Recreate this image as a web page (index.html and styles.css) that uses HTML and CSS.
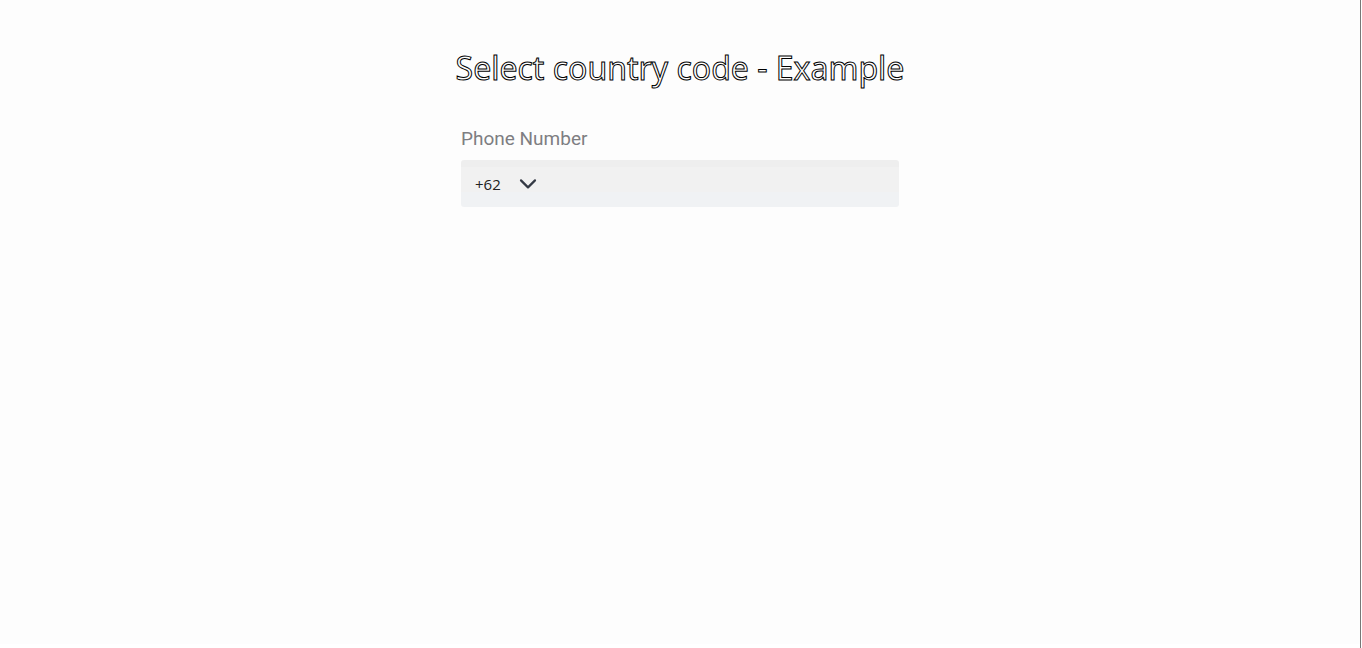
FILE: index.html
```html
<!DOCTYPE html>
<html lang="en">
<head>
<meta charset="utf-8">
<title>Select country code - Example</title>
<link rel="stylesheet" href="styles.css">
</head>
<body class="page">
<main class="content">
  <h1 class="title">Select country code - Example</h1>
  <form class="phone-form">
    <label class="phone-label" for="phone">Phone Number</label>
    <div class="phone-field">
      <div class="code-picker">
        <select class="code-select" aria-label="Country code">
          <option selected>+62</option>
        </select>
        <svg class="chevron" viewBox="0 0 18 12" aria-hidden="true"><path d="M2 2.4 9 9.4 16 2.4"/></svg>
      </div>
      <input class="phone-input" id="phone" type="tel">
    </div>
  </form>
</main>
</body>
</html>
```

FILE: styles.css
```css
* {
  box-sizing: border-box;
}

html {
  background: #fff;
}

.page {
  margin: 0 1px 0 0;
  min-height: 100vh;
  border-right: 1px solid #777;
  font-family: "Open Sans", "Noto Sans", sans-serif;
}

.content {
  display: flex;
  flex-direction: column;
  align-items: center;
  min-height: calc(100vh - 4px);
  padding: 44px 16px;
  background: #fdfdfd;
}

.title {
  margin: 0;
  color: #fff;
  font-family: "Noto Sans", sans-serif;
  font-size: 32px;
  font-weight: 400;
  line-height: 48px;
  -webkit-text-stroke: 1px #000;
}

.phone-form {
  width: 100%;
  max-width: 438px;
  margin-top: 34px;
}

.phone-label {
  display: block;
  margin-bottom: 8px;
  color: #7e7e82;
  font-family: Roboto, sans-serif;
  font-size: 19px;
  line-height: 26px;
}

.phone-field {
  display: flex;
  height: 47px;
  border-radius: 3px;
  background: linear-gradient(#eee 7px, #f1f1f1 7px, #f1f1f1 32px, #f0f2f4 32px);
}

.code-picker {
  display: flex;
  align-items: center;
  position: relative;
  width: 90px;
}

.code-select {
  width: 100%;
  height: 100%;
  padding: 0 0 0 14px;
  border: 0;
  appearance: none;
  background: transparent;
  color: #222;
  font: 15px "Open Sans", sans-serif;
}

.chevron {
  position: absolute;
  left: 58px;
  width: 18px;
  height: 12px;
  fill: none;
  stroke: #343a45;
  stroke-width: 2.2;
  stroke-linecap: round;
  stroke-linejoin: round;
  pointer-events: none;
}

.phone-input {
  flex: 1;
  min-width: 0;
  padding: 0 12px;
  border: 0;
  background: transparent;
  font: 16px "Open Sans", sans-serif;
}
```
